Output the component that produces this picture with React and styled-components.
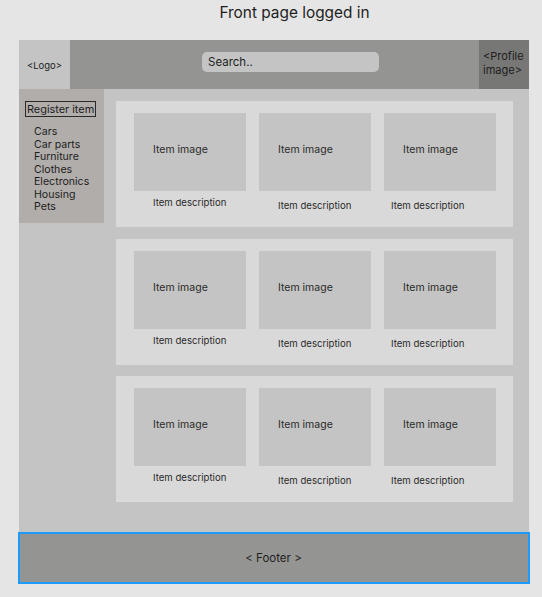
import React from "react";
import styled, { createGlobalStyle } from "styled-components";

const Global = createGlobalStyle`
  html, body { margin: 0; padding: 0; background: #e5e5e5; }
  body { font-family: Inter, "Noto Sans", "Liberation Sans", sans-serif; color: #222; }
  * { box-sizing: border-box; }
`;

const Page = styled.div`
  width: 542px;
  height: 597px;
  background: #e5e5e5;
  overflow: hidden;
`;

const Title = styled.h1`
  margin: 0;
  height: 40px;
  padding-top: 1px;
  padding-left: 47px;
  text-align: center;
  font-size: 15.4px;
  font-weight: 400;
  line-height: 23px;
  color: #1e1e1e;
`;

const Frame = styled.div`
  margin-left: 19px;
  width: 510px;
  background: #c4c4c4;
`;

const Header = styled.header`
  display: grid;
  grid-template-columns: 51px 1fr 50px;
  height: 49px;
  background: #949592;
`;

const LogoBox = styled.div`
  background: #c4c4c4;
  display: flex;
  align-items: center;
  justify-content: center;
  font-size: 9.5px;
  padding-top: 2px;
  color: #222;
`;

const SearchArea = styled.div`
  display: flex;
  align-items: flex-start;
  padding-top: 12px;
  padding-left: 132px;
`;

const SearchBox = styled.div`
  width: 177px;
  height: 20px;
  border-radius: 5px;
  background: #c4c4c4;
  font-size: 11.5px;
  line-height: 20px;
  padding-left: 6px;
  color: #1e1e1e;
`;

const ProfileBox = styled.div`
  background: #777776;
  font-size: 11px;
  line-height: 14px;
  padding: 9px 0 0 4px;
  color: #1e1e1e;
`;

const Body = styled.div`
  display: flex;
  align-items: flex-start;
  height: 443px;
`;

const Sidebar = styled.nav`
  width: 85px;
  height: 134px;
  background: #b1adab;
  padding: 12px 0 0 6px;
`;

const RegisterButton = styled.div`
  width: fit-content;
  border: 1.5px solid #2a2a2a;
  font-size: 10.9px;
  line-height: 14px;
  padding: 0 1px;
  color: #1e1e1e;
`;

const CategoryList = styled.ul`
  list-style: none;
  margin: 9px 0 0 9px;
  padding: 0;
  font-size: 10.6px;
  line-height: 12.5px;
  color: #1e1e1e;
`;

const Main = styled.main`
  flex: 1;
  display: flex;
  flex-direction: column;
  gap: 11.5px;
  padding: 12px 0 0 12px;
`;

const Card = styled.section`
  width: 397px;
  height: 126px;
  background: #d9d9d9;
  display: grid;
  grid-template-columns: repeat(3, 112px);
  column-gap: 13px;
  padding: 12px 0 0 18px;
`;

const Item = styled.div`
  display: flex;
  flex-direction: column;
`;

const ItemImage = styled.div`
  height: 78px;
  background: #c4c4c4;
  font-size: 10.5px;
  line-height: 14px;
  padding: 30px 0 0 19px;
  color: #2a2a2a;
`;

const ItemDesc = styled.div`
  margin-top: ${(p) => p.$top}px;
  padding-left: ${(p) => p.$left}px;
  font-size: 9.6px;
  line-height: 12px;
  color: #2a2a2a;
`;

const Footer = styled.footer`
  margin-left: 18px;
  width: 512px;
  height: 52px;
  background: #949592;
  border: 2px solid #1c9bfc;
  display: flex;
  align-items: center;
  justify-content: center;
  font-size: 11.5px;
  color: #1e1e1e;
  padding-right: 1px;
`;

const categories = ["Cars", "Car parts", "Furniture", "Clothes", "Electronics", "Housing", "Pets"];
const itemLayout = [
  { top: 6, left: 19 },
  { top: 9, left: 19 },
  { top: 9, left: 7 },
];

export default function App() {
  return (
    <Page>
      <Global />
      <Title>Front page logged in</Title>
      <Frame>
        <Header>
          <LogoBox>&lt;Logo&gt;</LogoBox>
          <SearchArea>
            <SearchBox>Search..</SearchBox>
          </SearchArea>
          <ProfileBox>
            &lt;Profile
            <br />
            image&gt;
          </ProfileBox>
        </Header>
        <Body>
          <Sidebar>
            <RegisterButton>Register item</RegisterButton>
            <CategoryList>
              {categories.map((c) => (
                <li key={c}>{c}</li>
              ))}
            </CategoryList>
          </Sidebar>
          <Main>
            {[0, 1, 2].map((row) => (
              <Card key={row}>
                {itemLayout.map((l, i) => (
                  <Item key={i}>
                    <ItemImage>Item image</ItemImage>
                    <ItemDesc $top={l.top} $left={l.left}>
                      Item description
                    </ItemDesc>
                  </Item>
                ))}
              </Card>
            ))}
          </Main>
        </Body>
      </Frame>
      <Footer>&lt; Footer &gt;</Footer>
    </Page>
  );
}
